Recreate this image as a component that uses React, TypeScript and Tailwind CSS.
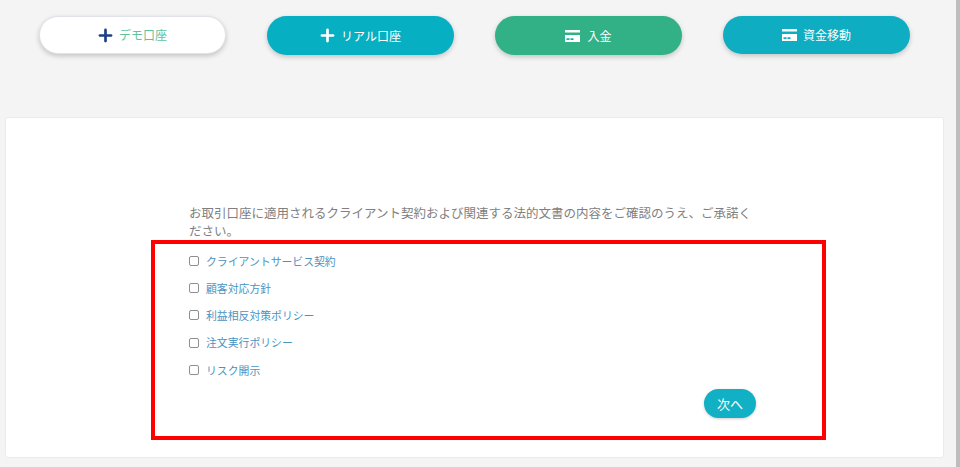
import { Plus } from "lucide-react";

const FONT = { fontFamily: '"Noto Sans CJK JP", "Noto Sans", sans-serif' };

const AGREEMENTS = [
  "クライアントサービス契約",
  "顧客対応方針",
  "利益相反対策ポリシー",
  "注文実行ポリシー",
  "リスク開示",
];

function CardIcon() {
  return (
    <svg width="15" height="12" viewBox="0 0 15 12" className="shrink-0">
      <path d="M0 0h15v2.6H0zM0 5h15v7H0z" fill="#fff" />
      <path d="M1.5 8.3h3v1.6h-3zM5.5 8.3h3v1.6h-3z" fill="#0eadc2" />
    </svg>
  );
}

export default function App() {
  return (
    <div className="flex h-[467px] w-[960px] overflow-hidden bg-[#f4f4f4]" style={FONT}>
      <main className="relative w-[956px] shrink-0">
        <div className="flex pl-[39px] pt-[16px]">
          <button className="flex h-[38px] w-[187px] items-center justify-center gap-[4px] rounded-full border border-[#e2e2ea] bg-white pr-[2px] text-[12px] text-[#5fc3a0] shadow-[0_2px_5px_rgba(0,0,0,0.2)]">
            <Plus size={19} strokeWidth={3.4} className="text-[#1c3f86]" />
            デモ口座
          </button>
          <button className="ml-[41px] flex h-[39px] w-[187px] items-center justify-center gap-[4px] rounded-full bg-[#06afc2] pr-[2px] text-[12px] text-white shadow-[0_2px_5px_rgba(0,0,0,0.2)]">
            <Plus size={19} strokeWidth={3.4} />
            リアル口座
          </button>
          <button className="ml-[41px] flex h-[39px] w-[187px] items-center justify-center gap-[7px] rounded-full bg-[#32b186] text-[12px] text-white shadow-[0_2px_5px_rgba(0,0,0,0.2)]">
            <CardIcon />
            入金
          </button>
          <button className="ml-[41px] flex h-[38px] w-[187px] items-center justify-center gap-[6px] rounded-full bg-[#0eadc2] text-[12px] text-white shadow-[0_2px_5px_rgba(0,0,0,0.2)]">
            <CardIcon />
            資金移動
          </button>
        </div>

        <section className="ml-[5px] mt-[62px] h-[341px] w-[939px] rounded-[3px] border border-[#ebebeb] bg-white pl-[183px] pt-[86px]">
          <p className="w-[566px] text-[12.5px] leading-[18px] text-[#808080]">
            お取引口座に適用されるクライアント契約および関連する法的文書の内容をご確認のうえ、ご承諾ください。
          </p>
          <ul className="mt-[12px] flex flex-col gap-[10px]">
            {AGREEMENTS.map((label) => (
              <li key={label} className="flex h-[17.3px] items-center gap-[7px]">
                <span className="h-[10px] w-[10px] rounded-[2px] border border-[#8f8f8f] bg-white" />
                <span className="text-[10.85px] text-[#4a94c2]">{label}</span>
              </li>
            ))}
          </ul>
          <div className="mt-[11px] flex w-[567px] justify-end">
            <button className="flex h-[29px] w-[52px] items-center justify-center rounded-full bg-[#12b0c4] text-[13px] text-white shadow-[0_1px_3px_rgba(0,0,0,0.2)]">
              次へ
            </button>
          </div>
        </section>

        {/* annotation drawn over the form */}
        <div className="pointer-events-none absolute left-[151px] top-[240px] h-[200px] w-[675px] border-[4px] border-[#ff0000]" />
      </main>
      <div className="w-[4px] shrink-0 bg-[#bdbdbd]" />
    </div>
  );
}
